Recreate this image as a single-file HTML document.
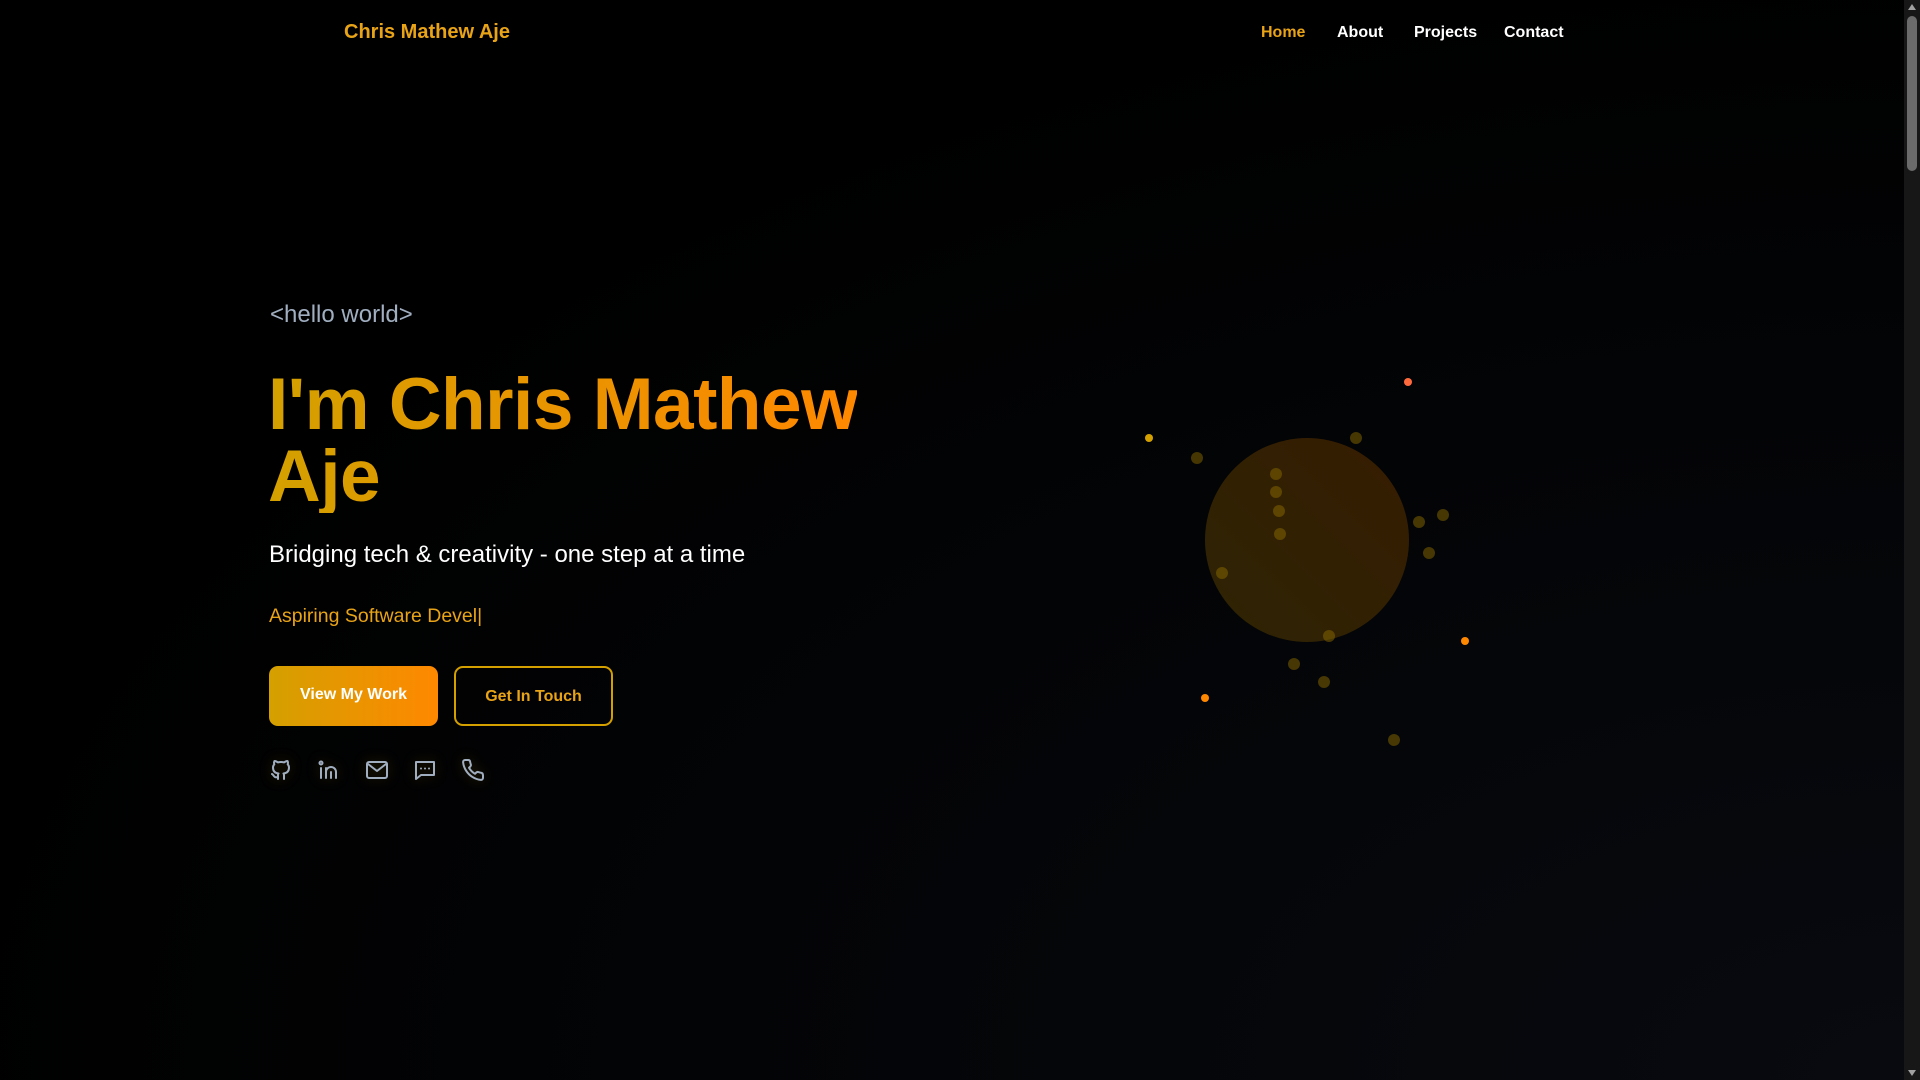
<!DOCTYPE html>
<html><head><meta charset="utf-8"><style>
*{margin:0;padding:0;box-sizing:border-box}
html,body{width:1920px;height:1080px;overflow:hidden}
body{background:radial-gradient(ellipse at 100% 100%,#080a10 0%,#030406 45%,#000 75%);font-family:"Liberation Sans",sans-serif;position:relative}
.a{position:absolute;white-space:nowrap}
.nav a{position:absolute;top:24px;font-size:16px;font-weight:bold;color:#fff;text-decoration:none}
.g{background:linear-gradient(90deg,#d4a000,#ff8800);-webkit-background-clip:text;background-clip:text;color:transparent}
.sb{position:absolute;right:0;top:0;width:16px;height:1080px;background:#171717}
.th{position:absolute;right:3px;top:16px;width:10px;height:155px;background:#6b6b6b;border-radius:5px}
svg.i{position:absolute;top:758px;width:24px;height:24px;fill:none;stroke:#a0aec0;stroke-width:2;stroke-linecap:round;stroke-linejoin:round;filter:drop-shadow(0 0 6px rgba(212,160,0,.25))}
</style></head><body>
<div class="a" style="left:344px;top:21px;font-size:20px;font-weight:bold;color:#e8a317">Chris Mathew Aje</div>
<div class="nav">
<a style="left:1261px;color:#e8a317">Home</a>
<a style="left:1337px">About</a>
<a style="left:1414px">Projects</a>
<a style="left:1504px">Contact</a>
</div>
<div class="a" style="left:270px;top:301px;font-size:24px;color:#a0aec0">&lt;hello world&gt;</div>
<div class="a g" style="left:268px;top:369px;font-size:73px;font-weight:bold;line-height:72px;letter-spacing:-0.5px">I'm Chris Mathew<br>Aje</div>
<div class="a" style="left:269px;top:541px;font-size:24px;color:#fff">Bridging tech &amp; creativity - one step at a time</div>
<div class="a" style="left:269px;top:605px;font-size:19.5px;color:#e8a317">Aspiring Software Devel|</div>
<div class="a" style="left:269px;top:666px;width:169px;height:60px;border-radius:9px;background:linear-gradient(90deg,#d4a000,#ff8800);color:#fff;font-weight:bold;font-size:16px;text-align:center;line-height:58px">View My Work</div>
<div class="a" style="left:454px;top:666px;width:159px;height:60px;border-radius:9px;border:2px solid #d4a000;color:#e8a317;font-weight:bold;font-size:16px;text-align:center;line-height:58px">Get In Touch</div>
<svg class="i" style="left:269px" viewBox="0 0 24 24"><path d="M9 19c-4.3 1.4-4.3-2.5-6-3m12 5v-3.5c0-1 .1-1.4-.5-2 2.8-.3 5.5-1.4 5.5-6a4.6 4.6 0 0 0-1.3-3.2 4.2 4.2 0 0 0-.1-3.2s-1.1-.3-3.5 1.3a12.3 12.3 0 0 0-6.2 0C6.5 2.8 5.4 3.1 5.4 3.1a4.2 4.2 0 0 0-.1 3.2A4.6 4.6 0 0 0 4 9.5c0 4.6 2.7 5.7 5.5 6-.6.6-.6 1.2-.5 2V21"/></svg>
<svg class="i" style="left:317px" viewBox="0 0 24 24"><path d="M4 10v10M9 20v-10M9 14a5 5 0 0 1 10 0v6M14 20v-6"/><circle cx="4" cy="5" r="1.5"/></svg>
<svg class="i" style="left:365px" viewBox="0 0 24 24"><rect x="2" y="4" width="20" height="16" rx="2"/><path d="M3 6l9 7 9-7"/></svg>
<svg class="i" style="left:413px" viewBox="0 0 24 24"><path d="M3 4h18v13H8l-5 4z"/><path d="M8 10.5h.01M12 10.5h.01M16 10.5h.01"/></svg>
<svg class="i" style="left:461px" viewBox="0 0 24 24"><path d="M22 16.9v3a2 2 0 0 1-2.2 2 19.8 19.8 0 0 1-8.6-3.1 19.5 19.5 0 0 1-6-6A19.8 19.8 0 0 1 2.1 4.2 2 2 0 0 1 4.1 2h3a2 2 0 0 1 2 1.7c.1.9.4 1.8.7 2.7a2 2 0 0 1-.5 2.1L8 9.8a16 16 0 0 0 6 6l1.3-1.3a2 2 0 0 1 2.1-.4c.9.3 1.8.6 2.7.7a2 2 0 0 1 1.7 2z"/></svg>
<svg class="a" style="left:0;top:0" width="1920" height="1080">
<defs><linearGradient id="c" x1="0" y1="1" x2="1" y2="0"><stop offset="0" stop-color="#2e2404"/><stop offset="1" stop-color="#361c02"/></linearGradient></defs>
<circle cx="1307" cy="540" r="102" fill="url(#c)"/>
<g fill="#8a6a00" fill-opacity=".5">
<circle cx="1197" cy="458" r="6"/><circle cx="1356" cy="438" r="6"/><circle cx="1276" cy="474" r="6"/><circle cx="1276" cy="492" r="6"/><circle cx="1279" cy="511" r="6"/><circle cx="1280" cy="534" r="6"/><circle cx="1222" cy="573" r="6"/><circle cx="1419" cy="522" r="6"/><circle cx="1443" cy="515" r="6"/><circle cx="1429" cy="553" r="6"/><circle cx="1329" cy="636" r="6"/><circle cx="1294" cy="664" r="6"/><circle cx="1324" cy="682" r="6"/><circle cx="1394" cy="740" r="6"/>
</g>
<circle cx="1408" cy="382" r="4" fill="#ff6a3d"/><circle cx="1149" cy="438" r="4" fill="#d4a000"/><circle cx="1465" cy="641" r="4" fill="#ff8800"/><circle cx="1205" cy="698" r="4" fill="#ff8800"/>
</svg>
<div class="sb"><div class="th"></div>
<svg style="position:absolute;left:4px;top:4px" width="8" height="6"><path d="M0 6L4 0L8 6z" fill="#a0a0a0"/></svg>
<svg style="position:absolute;left:4px;bottom:4px" width="8" height="6"><path d="M0 0L4 6L8 0z" fill="#a0a0a0"/></svg>
</div>
</body></html>
